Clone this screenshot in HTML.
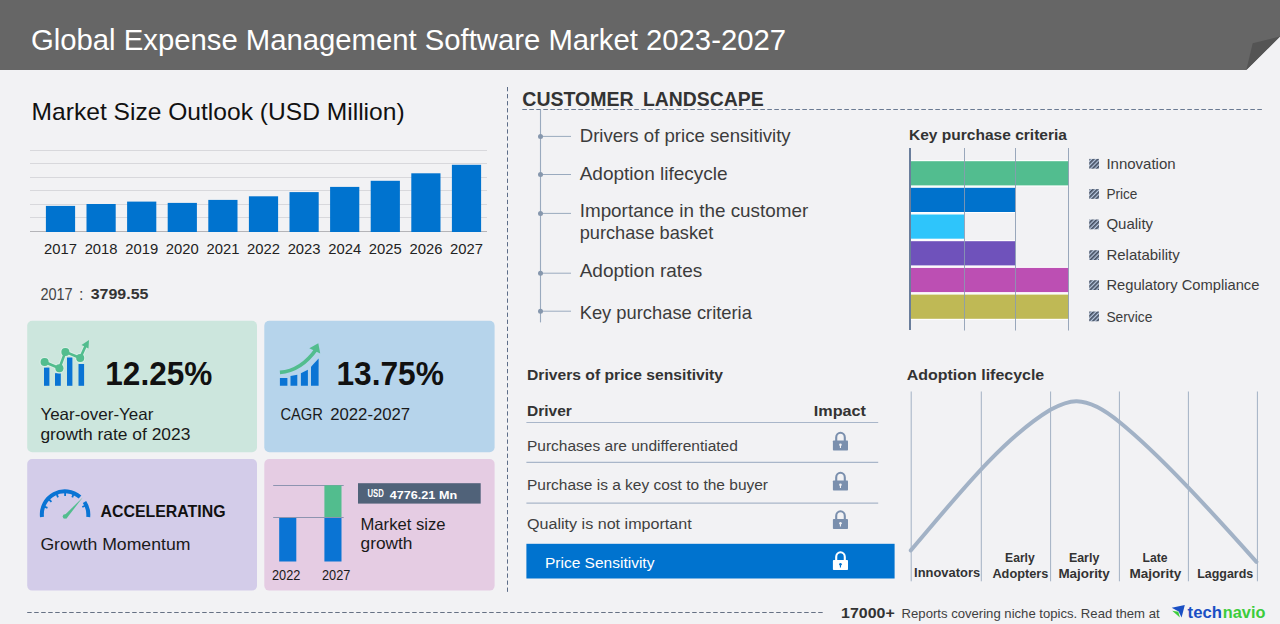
<!DOCTYPE html>
<html><head><meta charset="utf-8">
<style>
html,body{margin:0;padding:0;width:1280px;height:624px;overflow:hidden;background:#f2f2f4;}
svg{display:block;font-family:"Liberation Sans",sans-serif;}
</style></head><body>
<svg width="1280" height="624" viewBox="0 0 1280 624">
<defs>
<pattern id="hatch" width="3" height="3" patternUnits="userSpaceOnUse" patternTransform="rotate(45)">
<rect width="3" height="3" fill="#b8c8e0"/><rect width="1.7" height="3" fill="#434e60"/>
</pattern>
</defs>
<rect width="1280" height="624" fill="#f2f2f4"/>
<!-- HEADER -->
<polygon points="0,0 1280,0 1280,36.5 1246.3,70 0,70" fill="#666666"/>
<polygon points="1246.3,70 1252.7,43.3 1280,36.5" fill="#545454"/>
<text x="31" y="49.7" font-size="29" fill="#ffffff" textLength="755" lengthAdjust="spacingAndGlyphs">Global Expense Management Software Market 2023-2027</text>

<!-- LEFT: market size -->
<text x="31.6" y="120.3" font-size="24" fill="#111" textLength="373" lengthAdjust="spacingAndGlyphs">Market Size Outlook (USD Million)</text>
<g stroke="#d8d8dc" stroke-width="1">
<line x1="30" y1="150.5" x2="487" y2="150.5"/>
<line x1="30" y1="163.5" x2="487" y2="163.5"/>
<line x1="30" y1="177.5" x2="487" y2="177.5"/>
<line x1="30" y1="190.5" x2="487" y2="190.5"/>
<line x1="30" y1="204.5" x2="487" y2="204.5"/>
<line x1="30" y1="217.5" x2="487" y2="217.5"/>
</g>
<line x1="30" y1="231.5" x2="487" y2="231.5" stroke="#b4b4b8" stroke-width="1.2"/>
<g fill="#0073cf">
<rect x="45.9" y="205.9" width="29.2" height="26.1"/>
<rect x="86.5" y="204.0" width="29.2" height="28.0"/>
<rect x="127.1" y="201.6" width="29.2" height="30.4"/>
<rect x="167.7" y="202.9" width="29.2" height="29.1"/>
<rect x="208.3" y="199.9" width="29.2" height="32.1"/>
<rect x="248.9" y="196.3" width="29.2" height="35.7"/>
<rect x="289.5" y="192.1" width="29.2" height="39.9"/>
<rect x="330.1" y="186.9" width="29.2" height="45.1"/>
<rect x="370.7" y="180.8" width="29.2" height="51.2"/>
<rect x="411.3" y="173.3" width="29.2" height="58.7"/>
<rect x="451.9" y="164.8" width="29.2" height="67.2"/>
</g>
<g font-size="14.8" fill="#222" text-anchor="middle">
<text x="60.5" y="253.9">2017</text><text x="101.1" y="253.9">2018</text><text x="141.7" y="253.9">2019</text>
<text x="182.3" y="253.9">2020</text><text x="222.9" y="253.9">2021</text><text x="263.5" y="253.9">2022</text>
<text x="304.1" y="253.9">2023</text><text x="344.7" y="253.9">2024</text><text x="385.3" y="253.9">2025</text>
<text x="425.9" y="253.9">2026</text><text x="466.5" y="253.9">2027</text>
</g>
<text x="40.4" y="299.9" font-size="16" fill="#444" textLength="32.3" lengthAdjust="spacingAndGlyphs">2017</text>
<text x="79" y="299.9" font-size="16" fill="#444">:</text>
<text x="90.7" y="298.9" font-size="15.5" font-weight="bold" fill="#333" textLength="57.7" lengthAdjust="spacingAndGlyphs">3799.55</text>

<!-- CARDS -->
<rect x="27.2" y="320.8" width="229.8" height="131.5" rx="5" fill="#cce6dd"/>
<rect x="264.3" y="320.8" width="230.3" height="131.5" rx="5" fill="#b6d4eb"/>
<rect x="27.2" y="459.1" width="229.8" height="131.5" rx="5" fill="#d3cce9"/>
<rect x="264.3" y="459.1" width="230.3" height="131.5" rx="5" fill="#e5cce3"/>

<!-- card1 -->
<g fill="#0a74d4">
<rect x="44" y="367.6" width="5.4" height="18.2"/>
<rect x="55" y="373.2" width="5.8" height="12.6"/>
<rect x="67" y="357.5" width="5.4" height="28.3"/>
<rect x="78.5" y="364" width="5.6" height="21.8"/>
</g>
<g fill="none" stroke="#dcefe8" stroke-width="1.2" opacity="0.9"><polyline points="44.6,362 59.4,368.2 65.4,351.9 80.2,358 86,345" stroke-width="4.6"/><circle cx="44.6" cy="362" r="4.6"/><circle cx="59.4" cy="368.2" r="4.6"/><circle cx="65.4" cy="351.9" r="4.6"/><circle cx="80.2" cy="358" r="4.6"/></g>
<g fill="#52bd8e" stroke="#52bd8e">
<polyline points="44.6,362 59.4,368.2 65.4,351.9 80.2,358 86,345" fill="none" stroke-width="2.6"/>
<circle cx="44.6" cy="362" r="4" stroke="none"/>
<circle cx="59.4" cy="368.2" r="4" stroke="none"/>
<circle cx="65.4" cy="351.9" r="4" stroke="none"/>
<circle cx="80.2" cy="358" r="4" stroke="none"/>
<polygon points="89,340 81.5,345 88.5,348.5" stroke="none"/>
</g>
<text x="105.3" y="385" font-size="33.5" font-weight="bold" fill="#111" textLength="107" lengthAdjust="spacingAndGlyphs">12.25%</text>
<text x="40.4" y="420" font-size="16.5" fill="#1a1a1a" textLength="113" lengthAdjust="spacingAndGlyphs">Year-over-Year</text>
<text x="40.4" y="440" font-size="16.5" fill="#1a1a1a" textLength="150" lengthAdjust="spacingAndGlyphs">growth rate of 2023</text>

<!-- card2 -->
<g fill="#0a74d4">
<polygon points="279.9,378 287.4,378 287.4,385.75 279.9,385.75"/>
<polygon points="290.5,376 297.3,374.8 297.3,385.75 290.5,385.75"/>
<polygon points="300.9,373.2 307.9,369.8 307.9,385.75 300.9,385.75"/>
<polygon points="311,366.8 318.6,358.6 318.6,385.75 311,385.75"/>
</g>
<path d="M279.9,372.3 Q301,371 316.5,349" fill="none" stroke="#52bd8e" stroke-width="3.8"/>
<polygon points="309.3,348.3 318.3,343.3 320.2,353.6" fill="#52bd8e"/>
<text x="336.4" y="385" font-size="33.5" font-weight="bold" fill="#111" textLength="107.5" lengthAdjust="spacingAndGlyphs">13.75%</text>
<text x="280.4" y="420" font-size="16.5" fill="#1a1a1a" textLength="42.6" lengthAdjust="spacingAndGlyphs">CAGR</text><text x="330.2" y="420" font-size="16.5" fill="#1a1a1a" textLength="80" lengthAdjust="spacingAndGlyphs">2022-2027</text>

<!-- card3 gauge -->
<g>
<path d="M42,517 A23,23 0 0 1 80,497" fill="none" stroke="#0a74d4" stroke-width="4"/>
<path d="M84.5,502 A23,23 0 0 1 88.2,517" fill="none" stroke="#0a74d4" stroke-width="4"/>
<g stroke="#0a74d4" stroke-width="1.8"><line x1="47.48" y1="507.88" x2="43.77" y2="506.38"/><line x1="51.43" y1="501.80" x2="48.56" y2="499.02"/><line x1="57.98" y1="497.38" x2="56.48" y2="493.67"/><line x1="65.10" y1="496.00" x2="65.10" y2="492.00"/><line x1="72.22" y1="497.38" x2="73.72" y2="493.67"/><line x1="82.32" y1="506.97" x2="85.95" y2="505.28"/></g>
<path d="M63.7,515.9 L82.7,497.6 L66.5,518.5 Z" fill="#52bd8e"/>
<circle cx="65" cy="516.5" r="2.3" fill="#52bd8e"/>
</g>
<text x="100.5" y="516.8" font-size="16.5" font-weight="bold" fill="#111" textLength="125" lengthAdjust="spacingAndGlyphs">ACCELERATING</text>
<text x="40.4" y="549.8" font-size="16.5" fill="#1a1a1a" textLength="150" lengthAdjust="spacingAndGlyphs">Growth Momentum</text>

<!-- card4 -->
<line x1="273.2" y1="485.5" x2="343.7" y2="485.5" stroke="#8d94b0" stroke-width="1"/>
<rect x="324.4" y="485.3" width="17.1" height="32" fill="#52bd8e"/>
<rect x="279.2" y="517.3" width="17.1" height="44.2" fill="#0a74d4"/>
<rect x="324.4" y="517.3" width="17.1" height="44.2" fill="#0a74d4"/>
<line x1="273.2" y1="517.5" x2="343.7" y2="517.5" stroke="#8d94b0" stroke-width="1"/>
<text x="272" y="579.8" font-size="13.8" fill="#1a1a1a" textLength="28.4" lengthAdjust="spacingAndGlyphs">2022</text>
<text x="322" y="579.8" font-size="13.8" fill="#1a1a1a" textLength="28.4" lengthAdjust="spacingAndGlyphs">2027</text>
<rect x="358" y="483.2" width="122.7" height="20.4" fill="#506279"/>
<text x="367.5" y="497" font-size="10" font-weight="bold" fill="#fff" textLength="16.3" lengthAdjust="spacingAndGlyphs">USD</text>
<text x="389.8" y="499" font-size="11.4" font-weight="bold" fill="#fff" textLength="67.3" lengthAdjust="spacingAndGlyphs">4776.21 Mn</text>
<text x="360.5" y="530" font-size="16.5" fill="#1a1a1a" textLength="85" lengthAdjust="spacingAndGlyphs">Market size</text>
<text x="360.5" y="549.3" font-size="16.5" fill="#1a1a1a" textLength="52" lengthAdjust="spacingAndGlyphs">growth</text>

<!-- DIVIDERS -->
<line x1="507.5" y1="87" x2="507.5" y2="593.5" stroke="#5d6d88" stroke-width="1" stroke-dasharray="4.3,2.75"/>
<line x1="27.2" y1="612.5" x2="823" y2="612.5" stroke="#667184" stroke-width="1" stroke-dasharray="4.5,2.5"/>

<!-- CUSTOMER LANDSCAPE -->
<text x="522.3" y="105.8" font-size="20.5" font-weight="bold" fill="#333" textLength="111.3" lengthAdjust="spacingAndGlyphs">CUSTOMER</text><text x="643" y="105.8" font-size="20.5" font-weight="bold" fill="#333" textLength="120.7" lengthAdjust="spacingAndGlyphs">LANDSCAPE</text>
<line x1="522.3" y1="109.5" x2="1262" y2="109.5" stroke="#6a7a92" stroke-width="1" stroke-dasharray="4.6,2.4"/>
<line x1="540.5" y1="109.5" x2="540.5" y2="322.4" stroke="#9aaabe" stroke-width="1.1"/>
<g stroke="#9aaabe" stroke-width="1">
<line x1="540.5" y1="136.4" x2="571" y2="136.4"/>
<line x1="540.5" y1="174.5" x2="571" y2="174.5"/>
<line x1="540.5" y1="213.4" x2="571" y2="213.4"/>
<line x1="540.5" y1="273.2" x2="571" y2="273.2"/>
<line x1="540.5" y1="311.2" x2="571" y2="311.2"/>
</g>
<g fill="#8697ad">
<circle cx="540.5" cy="136.4" r="2.5"/><circle cx="540.5" cy="174.5" r="2.5"/><circle cx="540.5" cy="213.4" r="2.5"/>
<circle cx="540.5" cy="273.2" r="2.5"/><circle cx="540.5" cy="311.2" r="2.5"/>
</g>
<g font-size="19" fill="#3c3c3c">
<text x="579.7" y="142.3" textLength="211" lengthAdjust="spacingAndGlyphs">Drivers of price sensitivity</text>
<text x="579.7" y="180.4">Adoption lifecycle</text>
<text x="579.7" y="216.6" textLength="228.5" lengthAdjust="spacingAndGlyphs">Importance in the customer</text>
<text x="579.7" y="239.4" textLength="133.5" lengthAdjust="spacingAndGlyphs">purchase basket</text>
<text x="579.7" y="276.9">Adoption rates</text>
<text x="579.7" y="318.5" textLength="172.2" lengthAdjust="spacingAndGlyphs">Key purchase criteria</text>
</g>

<!-- KEY PURCHASE CRITERIA -->
<text x="909" y="140" font-size="15.5" font-weight="bold" fill="#333" textLength="158" lengthAdjust="spacingAndGlyphs">Key purchase criteria</text>
<rect x="910.9" y="160.1" width="157.6" height="26.4" fill="#fff"/><rect x="910.9" y="161.2" width="157.6" height="24.2" fill="#52bd8f"/>
<rect x="910.9" y="186.7" width="104.4" height="26.4" fill="#fff"/><rect x="910.9" y="187.8" width="104.4" height="24.2" fill="#0072cc"/>
<rect x="910.9" y="213.4" width="53.3" height="26.4" fill="#fff"/><rect x="910.9" y="214.5" width="53.3" height="24.2" fill="#2ec5fb"/>
<rect x="910.9" y="240.1" width="104.4" height="26.4" fill="#fff"/><rect x="910.9" y="241.2" width="104.4" height="24.2" fill="#6f52bb"/>
<rect x="910.9" y="266.8" width="157.6" height="26.4" fill="#fff"/><rect x="910.9" y="267.9" width="157.6" height="24.2" fill="#bc4fb3"/>
<rect x="910.9" y="293.5" width="157.6" height="26.4" fill="#fff"/><rect x="910.9" y="294.6" width="157.6" height="24.2" fill="#bfb955"/>
<g stroke="#8a9bb2" stroke-width="1" opacity="0.85">
<line x1="964.5" y1="148" x2="964.5" y2="330.5"/>
<line x1="1015.5" y1="148" x2="1015.5" y2="330.5"/>
<line x1="1068.5" y1="148" x2="1068.5" y2="330.5"/>
</g>
<line x1="910" y1="148" x2="910" y2="330" stroke="#6a7e9c" stroke-width="2"/>
<g fill="url(#hatch)">
<rect x="1089.2" y="158.9" width="9.8" height="9.8"/>
<rect x="1089.2" y="189.1" width="9.8" height="9.8"/>
<rect x="1089.2" y="219.5" width="9.8" height="9.8"/>
<rect x="1089.2" y="250.2" width="9.8" height="9.8"/>
<rect x="1089.2" y="280.2" width="9.8" height="9.8"/>
<rect x="1089.2" y="311.5" width="9.8" height="9.8"/>
</g>
<g font-size="15" fill="#3c3c3c">
<text x="1106.4" y="168.8">Innovation</text>
<text x="1106.4" y="198.9" textLength="31" lengthAdjust="spacingAndGlyphs">Price</text>
<text x="1106.4" y="229.3">Quality</text>
<text x="1106.4" y="260">Relatability</text>
<text x="1106.4" y="290" textLength="153" lengthAdjust="spacingAndGlyphs">Regulatory Compliance</text>
<text x="1106.4" y="321.7" textLength="46" lengthAdjust="spacingAndGlyphs">Service</text>
</g>

<!-- DRIVERS TABLE -->
<text x="527" y="379.9" font-size="15.5" font-weight="bold" fill="#333" textLength="196" lengthAdjust="spacingAndGlyphs">Drivers of price sensitivity</text>
<text x="527" y="415.8" font-size="15.5" font-weight="bold" fill="#333">Driver</text>
<text x="813.8" y="416.3" font-size="15.5" font-weight="bold" fill="#333" textLength="52.2" lengthAdjust="spacingAndGlyphs">Impact</text>
<g stroke="#a9b6c9" stroke-width="1.2">
<line x1="526.4" y1="422.5" x2="878.2" y2="422.5"/>
<line x1="526.4" y1="462.4" x2="878.2" y2="462.4"/>
<line x1="526.4" y1="503.1" x2="878.2" y2="503.1"/>
</g>
<g font-size="15.5" fill="#404040">
<text x="527" y="450.9">Purchases are undifferentiated</text>
<text x="527" y="489.6" textLength="241" lengthAdjust="spacingAndGlyphs">Purchase is a key cost to the buyer</text>
<text x="527" y="529" textLength="164.7" lengthAdjust="spacingAndGlyphs">Quality is not important</text>
</g>
<rect x="526.4" y="543.8" width="368.2" height="34.7" fill="#0073cf"/>
<text x="545" y="568" font-size="15.5" fill="#fff">Price Sensitivity</text>
<g transform="translate(0,0)">
<path d="M836.2,441 V437.5 A4.3,4.8 0 0 1 844.8,437.5 V441" fill="none" stroke="#7a8fad" stroke-width="2.1"/>
<rect x="832.9" y="440.4" width="15.1" height="10.1" rx="0.8" fill="#7a8fad"/>
<circle cx="840.45" cy="444.8" r="1.3" fill="#f2f2f4"/><rect x="839.9" y="445" width="1.1" height="3" fill="#f2f2f4"/>
</g>
<g transform="translate(0,40)">
<path d="M836.2,441 V437.5 A4.3,4.8 0 0 1 844.8,437.5 V441" fill="none" stroke="#7a8fad" stroke-width="2.1"/>
<rect x="832.9" y="440.4" width="15.1" height="10.1" rx="0.8" fill="#7a8fad"/>
<circle cx="840.45" cy="444.8" r="1.3" fill="#f2f2f4"/><rect x="839.9" y="445" width="1.1" height="3" fill="#f2f2f4"/>
</g>
<g transform="translate(0,78.5)">
<path d="M836.2,441 V437.5 A4.3,4.8 0 0 1 844.8,437.5 V441" fill="none" stroke="#7a8fad" stroke-width="2.1"/>
<rect x="832.9" y="440.4" width="15.1" height="10.1" rx="0.8" fill="#7a8fad"/>
<circle cx="840.45" cy="444.8" r="1.3" fill="#f2f2f4"/><rect x="839.9" y="445" width="1.1" height="3" fill="#f2f2f4"/>
</g>
<g transform="translate(0,119.5)">
<path d="M836.2,441 V437.5 A4.3,4.8 0 0 1 844.8,437.5 V441" fill="none" stroke="#ffffff" stroke-width="2.1"/>
<rect x="832.9" y="440.4" width="15.1" height="10.1" rx="0.8" fill="#ffffff"/>
<circle cx="840.45" cy="444.8" r="1.3" fill="#0073cf"/><rect x="839.9" y="445" width="1.1" height="3" fill="#0073cf"/>
</g>

<!-- ADOPTION LIFECYCLE -->
<text x="906.8" y="380.3" font-size="15.5" font-weight="bold" fill="#333" textLength="137.4" lengthAdjust="spacingAndGlyphs">Adoption lifecycle</text>
<g stroke="#a3b1c4" stroke-width="1">
<line x1="911.2" y1="391.5" x2="911.2" y2="581.3"/>
<line x1="981.3" y1="391.5" x2="981.3" y2="581.3"/>
<line x1="1050.6" y1="391.5" x2="1050.6" y2="581.3"/>
<line x1="1119.4" y1="391.5" x2="1119.4" y2="581.3"/>
<line x1="1188.4" y1="391.5" x2="1188.4" y2="581.3"/>
<line x1="1257.4" y1="391.5" x2="1257.4" y2="581.3"/>
</g>
<path d="M910.8,550.4 C950,505 1000,440 1050.4,409.7 C1063,403 1070,401 1076.8,401.2 C1090,401.5 1105,410 1119.4,422 C1160,455 1210,510 1256.4,561.8" fill="none" stroke="#a2b2c6" stroke-width="4" stroke-linecap="round"/>
<g font-size="13.5" font-weight="bold" fill="#333" text-anchor="middle">
<text x="947.1" y="577.3" textLength="66" lengthAdjust="spacingAndGlyphs">Innovators</text>
<text x="1019.9" y="561.8" textLength="29.6" lengthAdjust="spacingAndGlyphs">Early</text>
<text x="1020.4" y="577.6" textLength="56" lengthAdjust="spacingAndGlyphs">Adopters</text>
<text x="1084.1" y="561.8" textLength="30.4" lengthAdjust="spacingAndGlyphs">Early</text>
<text x="1084.1" y="577.9" textLength="51.4" lengthAdjust="spacingAndGlyphs">Majority</text>
<text x="1155.1" y="561.8" textLength="25" lengthAdjust="spacingAndGlyphs">Late</text>
<text x="1155.35" y="577.9" textLength="51.9" lengthAdjust="spacingAndGlyphs">Majority</text>
<text x="1225.2" y="577.9" textLength="56" lengthAdjust="spacingAndGlyphs">Laggards</text>
</g>

<!-- FOOTER -->
<text x="841.1" y="618.1" font-size="15.5" font-weight="bold" fill="#333" textLength="53.6" lengthAdjust="spacingAndGlyphs">17000+</text>
<text x="901.6" y="618.1" font-size="13" fill="#404040" textLength="258" lengthAdjust="spacingAndGlyphs">Reports covering niche topics. Read them at</text>
<path d="M1171.7,607.7 L1184.8,604.9 L1181.6,617.6 L1178.7,611.5 Z" fill="#1a4fc4"/>
<path d="M1172.2,610.8 L1178.3,611.8 L1179.9,617.6 Z" fill="#3ccc3c"/>
<text x="1187.6" y="617.6" font-size="17" font-weight="bold" fill="#1a4fc4" textLength="34.3" lengthAdjust="spacingAndGlyphs">tech</text>
<text x="1222.8" y="617.6" font-size="17" font-weight="bold" fill="#3ccc3c" textLength="42.6" lengthAdjust="spacingAndGlyphs">navio</text>
</svg>
</body></html>
